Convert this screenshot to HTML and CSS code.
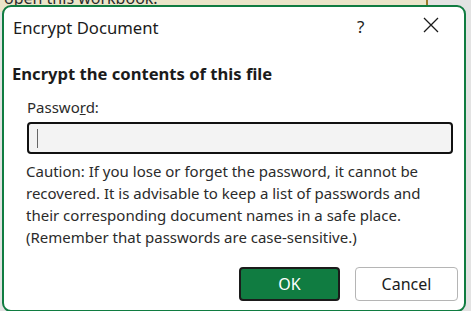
FILE: index.html
```html
<!DOCTYPE html>
<html>
<head>
<meta charset="utf-8">
<link rel="stylesheet" href="styles.css">
</head>
<body>
<div class="backdrop">
  <div class="behind-text">open this workbook.</div>
  <div class="behind-line"></div>
</div>
<div class="dialog">
  <div class="titlebar">
    <span class="title">Encrypt Document</span>
    <span class="help">?</span>
    <span class="close">
      <svg width="16" height="16" viewBox="0 0 16 16"><path d="M1 1 L15 15 M15 1 L1 15" stroke="#1a1a1a" stroke-width="1.3" fill="none"/></svg>
    </span>
  </div>
  <div class="heading">Encrypt the contents of this file</div>
  <div class="field">
    <label class="label">Passwo<u>r</u>d:</label>
    <div class="input"><span class="caret"></span></div>
  </div>
  <p class="caution">Caution: If you lose or forget the password, it cannot be recovered. It is advisable to keep a list of passwords and their corresponding document names in a safe place. (Remember that passwords are case-sensitive.)</p>
  <div class="buttons">
    <button class="btn primary">OK</button>
    <button class="btn secondary">Cancel</button>
  </div>
</div>
</body>
</html>
```
FILE: styles.css
```css
html, body {
  margin: 0;
  padding: 0;
}
body {
  width: 471px;
  height: 311px;
  overflow: hidden;
  background: #e3e3e3;
  font-family: "Noto Sans", "Open Sans", sans-serif;
  color: #1b1b1b;
  position: relative;
}
.backdrop {
  position: absolute;
  left: 0;
  top: 0;
  width: 428px;
  height: 12px;
  background: #ebe5c9;
  overflow: hidden;
}
.behind-text {
  position: absolute;
  left: 4px;
  top: -11px;
  font-size: 16px;
  line-height: 18px;
  color: #2b2b2b;
}
.behind-line {
  position: absolute;
  right: 0;
  top: 0;
  width: 2px;
  height: 12px;
  background: #9a7a2a;
}
.dialog {
  position: absolute;
  left: 2px;
  top: 5px;
  width: 460px;
  height: 303px;
  background: #ffffff;
  border: 2px solid #107c41;
  border-radius: 9px;
  box-sizing: content-box;
}
.titlebar {
  display: flex;
  align-items: center;
  height: 42px;
  padding-left: 9px;
}
.title {
  font-size: 16.7px;
  flex: 1;
  margin-top: -2px;
}
.help {
  font-size: 17px;
  width: 20px;
  margin-right: 46px;
  margin-top: -4px;
  color: #222;
}
.close {
  display: flex;
  margin-right: 25px;
  margin-top: -6px;
}
.heading {
  font-weight: bold;
  font-size: 16.6px;
  padding-left: 8px;
  margin-top: 13px;
}
.field {
  padding-left: 23px;
  margin-top: 12px;
}
.label {
  display: block;
  font-size: 15px;
  color: #2b2b2b;
}
.input {
  margin-top: 5px;
  width: 414px;
  height: 28px;
  border: 2px solid #111;
  border-radius: 4px;
  background: #f3f3f3;
  display: flex;
  align-items: center;
  padding-left: 8px;
}
.caret {
  width: 1px;
  height: 19px;
  background: #666;
}
.caution {
  margin: 6px 0 0 0;
  padding: 0 28px 0 22px;
  font-size: 15px;
  line-height: 22px;
  color: #2b2b2b;
}
.buttons {
  display: flex;
  justify-content: flex-end;
  gap: 15px;
  padding-right: 6px;
  margin-top: 19px;
}
.btn {
  font-family: inherit;
  font-size: 16px;
  height: 34px;
  border-radius: 4px;
  cursor: default;
}
.primary {
  width: 101px;
  background: #107c41;
  color: #fff;
  border: 2px solid #1b1b1b;
}
.secondary {
  width: 103px;
  background: #fff;
  color: #1b1b1b;
  border: 1px solid #b5b5b5;
}
```
